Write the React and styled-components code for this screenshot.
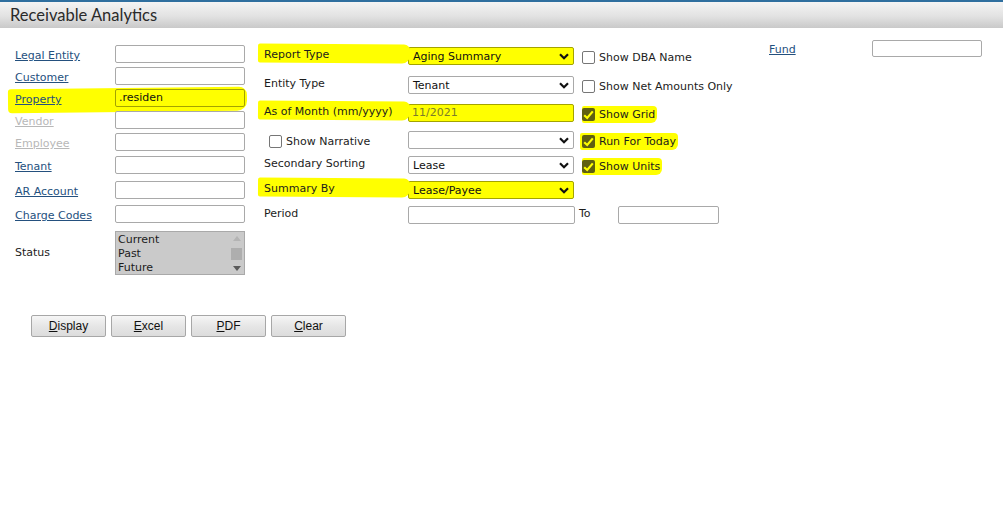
import styled, { createGlobalStyle, css } from "styled-components";

const GlobalStyle = createGlobalStyle`
  body {
    margin: 0;
    background: #fff;
    font-family: "DejaVu Sans", Verdana, sans-serif;
    font-size: 11px;
    color: #1c1c1c;
  }
`;

const HIGHLIGHT = "#ffff00";

const Page = styled.div`
  width: 1003px;
  min-height: 521px;
`;

const TitleBar = styled.div`
  height: 26px;
  border-top: 2px solid #2f6f9f;
  background: linear-gradient(#f4f4f4, #e2e2e2 55%, #c9c9c9);
  display: flex;
  align-items: center;
  padding-left: 10px;
`;

const Title = styled.h1`
  margin: 0;
  font-family: Lato, "Liberation Sans", sans-serif;
  font-weight: 400;
  font-size: 16.5px;
  color: #2a2a2a;
`;

const FormArea = styled.div`
  display: flex;
  align-items: flex-start;
`;

const Column = styled.div`
  display: flex;
  flex-direction: column;
  padding-top: ${(p) => p.$top}px;
  margin-left: ${(p) => p.$left}px;
  width: ${(p) => (p.$width ? `${p.$width}px` : "auto")};
`;

const Row = styled.div`
  display: flex;
  align-items: flex-start;
  height: ${(p) => p.$h}px;
  position: relative;
  isolation: isolate;
  ${(p) =>
    p.$marked &&
    css`
      &::before {
        content: "";
        position: absolute;
        left: -7px;
        top: -1px;
        width: 239px;
        height: 24px;
        background: ${HIGHLIGHT};
        border-radius: 3px 8px 10px 4px;
        transform: rotate(-0.6deg);
        z-index: -1;
      }
    `}
`;

const LinkLabel = styled.a`
  width: 100px;
  line-height: 18px;
  padding-top: 2px;
  color: ${(p) => (p.$disabled ? "#b8b8b8" : "#24507e")};
  text-decoration: underline;
  cursor: pointer;
`;

const PlainLabel = styled.span`
  width: 100px;
  line-height: 18px;
  align-self: center;
`;

const fieldBase = css`
  box-sizing: border-box;
  height: ${(p) => p.$h || 18}px;
  width: ${(p) => p.$w}px;
  border: 1px solid ${(p) => (p.$marked ? "#a3a300" : "#a9a9a9")};
  border-radius: 2px;
  background: ${(p) => (p.$marked ? HIGHLIGHT : "#fff")};
  font-family: inherit;
  font-size: 11px;
  color: #111;
`;

const TextBox = styled.div`
  ${fieldBase};
  padding: 0 3px;
  line-height: 16px;
  color: ${(p) => (p.$muted ? "#7c7c2a" : "#111")};
  margin-left: ${(p) => p.$ml || 0}px;
`;

const SelectBox = styled.div`
  ${fieldBase};
  display: flex;
  align-items: center;
  justify-content: space-between;
  padding: 0 4px 0 4px;
`;

const ListBox = styled.div`
  box-sizing: border-box;
  width: 130px;
  height: 44px;
  border: 1px solid #a9a9a9;
  background: #cacaca;
  display: flex;
`;

const ListItems = styled.div`
  flex: 1;
  padding: 1px 2px;
  line-height: 14px;
`;

const ScrollTrack = styled.div`
  width: 15px;
  display: flex;
  flex-direction: column;
  align-items: center;
  justify-content: space-between;
  padding: 4px 0 3px;
`;

const ScrollThumb = styled.div`
  width: 11px;
  height: 12px;
  background: #aeaeae;
`;

const MidLabel = styled.div`
  width: 144px;
  line-height: 15px;
  position: relative;
  isolation: isolate;
  display: flex;
  align-items: center;
  ${(p) =>
    p.$marked &&
    css`
      &::before {
        content: "";
        position: absolute;
        left: -6px;
        top: -3px;
        width: 152px;
        height: 19px;
        background: ${HIGHLIGHT};
        border-radius: 2px 6px 8px 2px;
        transform: rotate(0.4deg);
        z-index: -1;
      }
    `}
`;

const CheckCell = styled.div`
  margin-left: ${(p) => p.$ml ?? 8}px;
  display: flex;
  align-items: center;
`;

const CheckLabel = styled.label`
  display: inline-flex;
  align-items: center;
  gap: 4px;
  height: 17px;
  padding: ${(p) => (p.$marked ? "0 2px 0 0" : "0")};
  margin-top: ${(p) => (p.$marked ? "2px" : "2px")};
  background: ${(p) => (p.$marked ? HIGHLIGHT : "transparent")};
  border-radius: 2px 4px 6px 2px;
  padding-left: ${(p) => p.$pl || 0}px;
`;

const Box = styled.span`
  box-sizing: border-box;
  width: 13px;
  height: 13px;
  border-radius: 2px;
  border: ${(p) => (p.$checked ? "none" : "1px solid #767676")};
  background: ${(p) => (p.$checked ? "#5f5f12" : "#fff")};
  display: inline-flex;
  align-items: center;
  justify-content: center;
`;

const PeriodTo = styled.span`
  line-height: 15px;
  align-self: flex-start;
`;

const FundLabel = styled.a`
  width: 103px;
  line-height: 18px;
  padding-top: 1px;
  color: #24507e;
  text-decoration: underline;
`;

const ButtonRow = styled.div`
  display: flex;
  gap: 5px;
  margin-top: 40px;
  padding-left: 31px;
`;

const Button = styled.button`
  box-sizing: border-box;
  width: 75px;
  height: 22px;
  border: 1px solid #a7a7a7;
  border-radius: 2px;
  background: linear-gradient(#f6f6f6, #e6e6e6 50%, #dcdcdc);
  font-family: "Liberation Sans", Arial, sans-serif;
  font-size: 12px;
  color: #111;
  padding: 0;
  u {
    text-decoration: underline;
  }
`;

const Chevron = () => (
  <svg width="10" height="7" viewBox="0 0 10 7">
    <path d="M1 1.2 L5 5.2 L9 1.2" fill="none" stroke="#111" strokeWidth="2.2" />
  </svg>
);

const Tick = () => (
  <svg width="11" height="10" viewBox="0 0 11 10">
    <path d="M1.2 5.2 L4.2 8 L9.8 1.4" fill="none" stroke={HIGHLIGHT} strokeWidth="2.2" />
  </svg>
);

const Arrow = ({ up, color }) => (
  <svg width="8" height="5" viewBox="0 0 8 5">
    <path d={up ? "M0 5 L4 0 L8 5 Z" : "M0 0 L8 0 L4 5 Z"} fill={color} />
  </svg>
);

const Check = ({ label, checked, marked, pl }) => (
  <CheckLabel $marked={marked} $pl={pl}>
    <Box $checked={checked}>{checked && <Tick />}</Box>
    {label}
  </CheckLabel>
);

const Select = ({ value, marked, w = 166 }) => (
  <SelectBox $w={w} $marked={marked}>
    <span>{value}</span>
    <Chevron />
  </SelectBox>
);

const lookups = [
  { label: "Legal Entity", h: 22 },
  { label: "Customer", h: 22 },
  { label: "Property", h: 22, value: ".residen", marked: true },
  { label: "Vendor", h: 22, disabled: true },
  { label: "Employee", h: 23, disabled: true },
  { label: "Tenant", h: 25 },
  { label: "AR Account", h: 24 },
  { label: "Charge Codes", h: 26 },
];

const buttons = ["Display", "Excel", "PDF", "Clear"];

export default function App() {
  return (
    <Page>
      <GlobalStyle />
      <TitleBar>
        <Title>Receivable Analytics</Title>
      </TitleBar>

      <FormArea>
        <Column $top={17} $left={15} $width={230}>
          {lookups.map((f) => (
            <Row key={f.label} $h={f.h} $marked={f.marked}>
              <LinkLabel $disabled={f.disabled}>{f.label}</LinkLabel>
              <TextBox $w={130} $marked={f.marked}>
                {f.value}
              </TextBox>
            </Row>
          ))}
          <Row $h={44}>
            <PlainLabel>Status</PlainLabel>
            <ListBox>
              <ListItems>
                <div>Current</div>
                <div>Past</div>
                <div>Future</div>
              </ListItems>
              <ScrollTrack>
                <Arrow up color="#b4b4b4" />
                <ScrollThumb />
                <Arrow color="#5a5a5a" />
              </ScrollTrack>
            </ListBox>
          </Row>
        </Column>

        <Column $top={19} $left={19} $width={497}>
          <Row $h={29}>
            <MidLabel $marked>Report Type</MidLabel>
            <Select value="Aging Summary" marked />
            <CheckCell>
              <Check label="Show DBA Name" />
            </CheckCell>
          </Row>
          <Row $h={28}>
            <MidLabel>Entity Type</MidLabel>
            <Select value="Tenant" />
            <CheckCell>
              <Check label="Show Net Amounts Only" />
            </CheckCell>
          </Row>
          <Row $h={27}>
            <MidLabel $marked>As of Month (mm/yyyy)</MidLabel>
            <TextBox $w={166} $marked $muted>
              11/2021
            </TextBox>
            <CheckCell>
              <Check label="Show Grid" checked marked />
            </CheckCell>
          </Row>
          <Row $h={25}>
            <MidLabel>
              <Check label="Show Narrative" pl={5} />
            </MidLabel>
            <Select value="" />
            <CheckCell $ml={6}>
              <Check label="Run For Today" checked marked pl={2} />
            </CheckCell>
          </Row>
          <Row $h={25}>
            <MidLabel>Secondary Sorting</MidLabel>
            <Select value="Lease" />
            <CheckCell>
              <Check label="Show Units" checked marked />
            </CheckCell>
          </Row>
          <Row $h={25}>
            <MidLabel $marked>Summary By</MidLabel>
            <Select value="Lease/Payee" marked />
          </Row>
          <Row $h={18}>
            <MidLabel>Period</MidLabel>
            <TextBox $w={167} />
            <CheckCell $ml={4}>
              <PeriodTo>To</PeriodTo>
            </CheckCell>
            <TextBox $w={101} $ml={27} />
          </Row>
        </Column>

        <Column $top={12} $left={8}>
          <Row $h={18}>
            <FundLabel>Fund</FundLabel>
            <TextBox $w={110} $h={17} />
          </Row>
        </Column>
      </FormArea>

      <ButtonRow>
        {buttons.map((b) => (
          <Button key={b}>
            <u>{b[0]}</u>
            {b.slice(1)}
          </Button>
        ))}
      </ButtonRow>
    </Page>
  );
}
